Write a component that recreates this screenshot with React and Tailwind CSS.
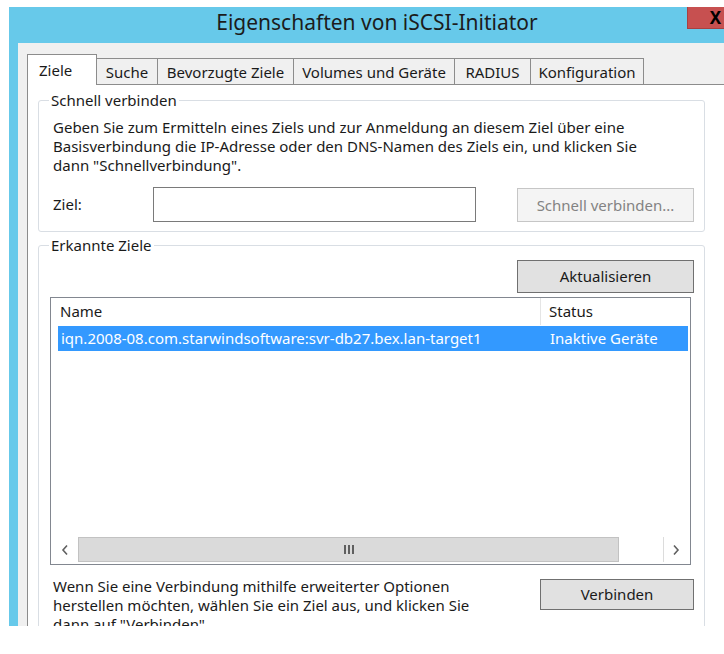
import React from 'react';

const tabs = [
  { label: 'Suche', w: 'w-[61px]' },
  { label: 'Bevorzugte Ziele', w: 'w-[136px]' },
  { label: 'Volumes und Geräte', w: 'w-[161px]' },
  { label: 'RADIUS', w: 'w-[76px]' },
  { label: 'Konfiguration', w: 'w-[113px]' },
];

function GroupBox({ title, className, children }) {
  return (
    <div className={`border border-[#d9dee4] rounded-[3px] ${className}`}>
      <div className="-mt-[11px] ml-[10px] w-fit bg-white px-[2px] leading-[20px]">{title}</div>
      {children}
    </div>
  );
}

function Button({ children, className, disabled }) {
  return (
    <button
      className={
        disabled
          ? `flex items-center justify-center border border-[#c6c6c6] bg-[#f4f4f4] text-[#838383] ${className}`
          : `flex items-center justify-center border border-[#707070] bg-[#e1e1e1] ${className}`
      }
    >
      {children}
    </button>
  );
}

function Chevron({ dir }) {
  return (
    <svg width="8" height="12" viewBox="0 0 8 12" fill="none" stroke="#606060" strokeWidth="1.6">
      {dir === 'left' ? <polyline points="6,1.5 2,6 6,10.5" /> : <polyline points="2,1.5 6,6 2,10.5" />}
    </svg>
  );
}

function ScrollBar() {
  return (
    <div className="flex h-[25px] ml-px mr-[2px] mb-[2px]">
      <div className="w-[26px] bg-white flex items-center justify-center">
        <Chevron dir="left" />
      </div>
      <div className="w-[541px] bg-[#dadada] border border-[#c2c2c2] flex items-center justify-center gap-[2px]">
        <span className="w-[2px] h-[9px] bg-[#5f5f5f]" />
        <span className="w-[2px] h-[9px] bg-[#5f5f5f]" />
        <span className="w-[2px] h-[9px] bg-[#5f5f5f]" />
      </div>
      <div className="flex-1 bg-white" />
      <div className="w-[25px] bg-white border-l border-[#dcdcdc] flex items-center justify-center">
        <Chevron dir="right" />
      </div>
    </div>
  );
}

export default function App() {
  return (
    <div className="w-[724px] h-[654px] overflow-hidden bg-white font-['Noto_Sans',sans-serif] text-[15px] text-[#1a1a1a]">
      <div className="ml-[9px] mt-[7px] w-[736px] h-[619px] bg-[#67c9ea] flex flex-col">
        <div className="h-[36px] flex shrink-0">
          <div className="w-[58px]" />
          <div className="flex-1 text-center text-[21px] leading-[30px] text-[#1c1c1c]">Eigenschaften von iSCSI-Initiator</div>
          <div className="w-[56px] h-[22px] mr-[2px] bg-[#c75050] border-b border-l border-[#a84141] flex items-center justify-center text-black font-bold text-[17px]">
            X
          </div>
        </div>

        <div className="ml-[9px] flex-1 min-h-0 overflow-hidden bg-[#f0f0f0] pt-[11px] pl-[9px] flex flex-col">
          <div className="flex items-end h-[31px] shrink-0">
            <div className="relative z-10 w-[70px] h-[31px] border-l border-t border-r border-[#8c8c8c] bg-white pl-[11px] pt-[5px] leading-[20px]">
              Ziele
            </div>
            {tabs.map((t) => (
              <div
                key={t.label}
                className={`${t.w} h-[27px] border-t border-r border-[#8c8c8c] bg-[#f0f0f0] pt-[3px] leading-[20px] text-center whitespace-nowrap`}
              >
                {t.label}
              </div>
            ))}
          </div>

          <div className="-mt-px flex-1 border-t border-l border-[#8c8c8c] bg-white pt-[15px]">
            <GroupBox title="Schnell verbinden" className="ml-[10px] w-[667px] h-[132px]">
              <p className="mt-[8px] pl-[14px] leading-[19px] whitespace-nowrap">
                Geben Sie zum Ermitteln eines Ziels und zur Anmeldung an diesem Ziel über eine
                <br />
                Basisverbindung die IP-Adresse oder den DNS-Namen des Ziels ein, und klicken Sie
                <br />
                dann "Schnellverbindung".
              </p>
              <div className="mt-[12px] pl-[14px] flex items-start">
                <span className="w-[100px] leading-[35px]">Ziel:</span>
                <div className="w-[323px] h-[35px] border border-[#7a7a7a] bg-white" />
                <Button disabled className="ml-[41px] mt-px w-[177px] h-[34px]">
                  Schnell verbinden...
                </Button>
              </div>
            </GroupBox>

            <GroupBox title="Erkannte Ziele" className="mt-[13px] ml-[10px] w-[667px] h-[420px]">
              <div className="mt-[5px] pr-[10px] flex justify-end">
                <Button className="w-[177px] h-[33px]">Aktualisieren</Button>
              </div>

              <div className="mt-[4px] ml-[11px] w-[641px] h-[268px] border border-[#828790] flex flex-col">
                <div className="h-[27px] flex items-center shrink-0">
                  <div className="w-[490px] h-full pl-[9px] flex items-center border-r border-[#e5e5e5]">Name</div>
                  <div className="pl-[8px]">Status</div>
                </div>
                <div className="mt-px ml-[7px] w-[630px] h-[25px] bg-[#3399ff] text-white flex items-center whitespace-nowrap">
                  <div className="w-[492px] pl-[3px]">iqn.2008-08.com.starwindsoftware:svr-db27.bex.lan-target1</div>
                  <div>Inaktive Geräte</div>
                </div>
                <div className="flex-1" />
                <ScrollBar />
              </div>

              <div className="mt-[12px] pr-[10px] flex justify-between">
                <p className="pl-[14px] leading-[19px] whitespace-nowrap">
                  Wenn Sie eine Verbindung mithilfe erweiterter Optionen
                  <br />
                  herstellen möchten, wählen Sie ein Ziel aus, und klicken Sie
                  <br />
                  dann auf "Verbinden".
                </p>
                <Button className="mt-[2px] w-[154px] h-[31px]">Verbinden</Button>
              </div>
            </GroupBox>
          </div>
        </div>
      </div>
    </div>
  );
}
